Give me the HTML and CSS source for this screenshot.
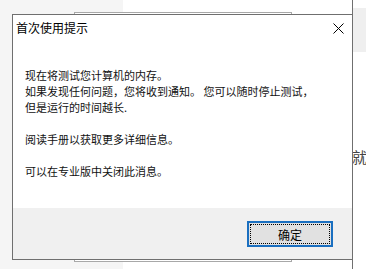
FILE: index.html
```html
<!DOCTYPE html>
<html lang="zh-CN">
<head>
<meta charset="utf-8">
<title>首次使用提示</title>
<link rel="stylesheet" href="styles.css">
</head>
<body>
<div class="desk">
  <div class="win-left"></div>
  <div class="win-main"></div>
  <div class="win-right">
    <div class="strip"></div>
    <div class="peek">就</div>
  </div>
  <div class="win-back"></div>
  <div class="dialog">
    <div class="titlebar">
      <span class="title">首次使用提示</span>
      <svg class="close" width="11" height="11" viewBox="0 0 11 11"><path d="M0.5 0.5L10.5 10.5M10.5 0.5L0.5 10.5" stroke="#000" stroke-width="1"/></svg>
    </div>
    <div class="content">
      <p>现在将测试您计算机的内存。<br>如果发现任何问题，您将收到通知。 您可以随时停止测试，<br>但是运行的时间越长.</p>
      <p>阅读手册以获取更多详细信息。</p>
      <p>可以在专业版中关闭此消息。</p>
    </div>
    <div class="footer">
      <button class="ok"><span class="focus">确定</span></button>
    </div>
  </div>
</div>
</body>
</html>
```

FILE: styles.css
```css
* { box-sizing: border-box; }
html, body { margin: 0; padding: 0; }
body {
  width: 366px;
  height: 269px;
  overflow: hidden;
  background: #ffffff;
  font-family: "Noto Sans CJK SC", "Microsoft YaHei", sans-serif;
  color: #000;
}
.desk { position: relative; width: 366px; height: 269px; }
.win-left {
  position: absolute; left: 0; top: 0; width: 123px; height: 269px;
  background: #f5f5f5;
}
.win-main {
  position: absolute; left: 123px; top: 0; width: 230px; height: 269px;
  background: #ffffff;
  border-right: 1px solid #707070;
}
.win-right {
  position: absolute; left: 353px; top: 0; width: 13px; height: 269px;
  background: #ffffff; overflow: hidden;
}
.win-right .strip { margin-top: 8px; height: 44px; background: #efefef; }
.win-right .peek {
  margin-top: 96px; margin-left: -1px;
  font-size: 15px; line-height: 18px; color: #444; white-space: nowrap;
}
.win-back {
  position: absolute; left: 74px; top: 12px; width: 218px; height: 250px;
  background: #ffffff;
  border: 1px solid #a8a8a8;
}
.dialog {
  position: absolute; left: 12px; top: 14px; width: 341px; height: 246px;
  background: #ffffff;
  border: 1px solid #6f6f6f;
  display: flex; flex-direction: column;
}
.titlebar {
  height: 26px;
  display: flex; align-items: center; justify-content: space-between;
  padding: 0 8px 0 3px;
}
.title { font-size: 12px; line-height: 16px; }
.close { display: block; margin-top: 1px; }
.content {
  flex: 1;
  padding: 26px 0 0 12px;
  font-size: 11px;
  line-height: 16px;
  color: #111;
}
.content p { margin: 0 0 16px 0; white-space: nowrap; }
.footer {
  height: 51px;
  background: #f0f0f0;
  display: flex; justify-content: flex-end; align-items: flex-start;
  padding: 13px 19px 0 0;
}
.ok {
  width: 86px; height: 26px;
  border: 2px solid #1a6fc0;
  background: #e1e1e1;
  padding: 1px;
  margin: 0;
  font-family: inherit;
  display: flex;
}
.ok .focus {
  flex: 1;
  border: 1px dotted #000;
  display: flex; align-items: center; justify-content: center;
  font-size: 12px; color: #000;
}
```
